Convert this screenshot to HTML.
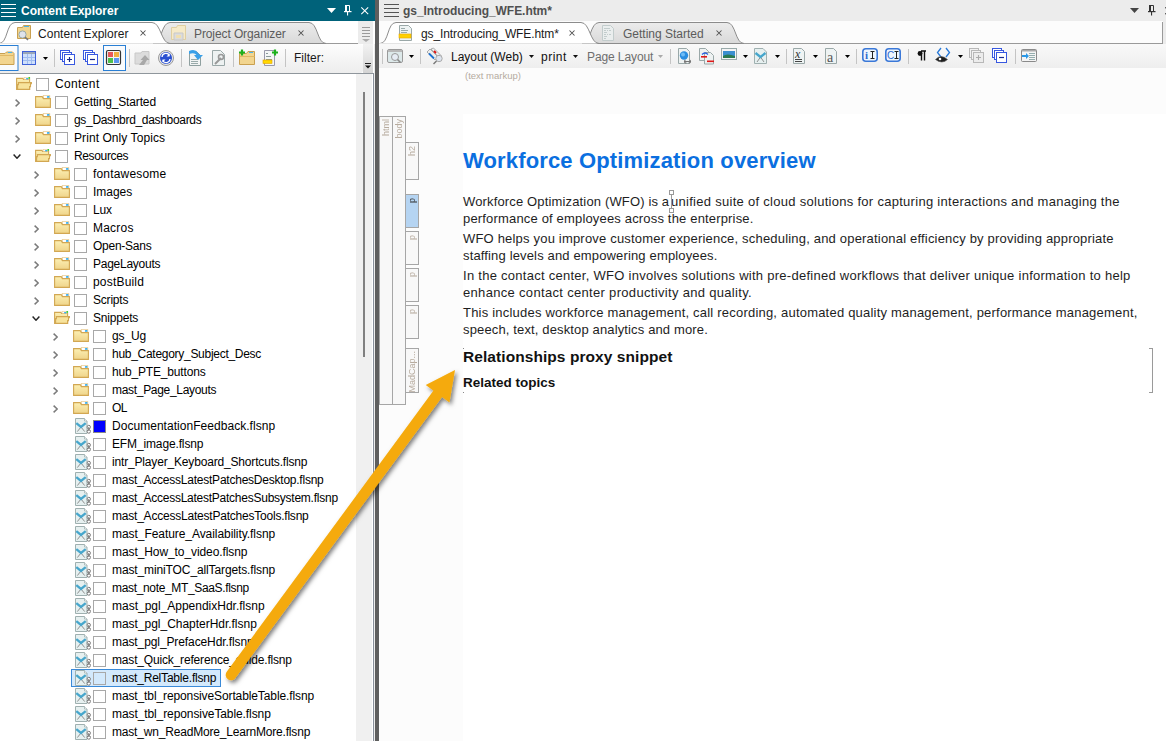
<!DOCTYPE html>
<html><head><meta charset="utf-8">
<style>
*{box-sizing:border-box}
html,body{margin:0;padding:0;width:1166px;height:741px;overflow:hidden;background:#fff;font-family:"Liberation Sans",sans-serif;}
.a{position:absolute}
#lp{position:absolute;left:0;top:0;width:375px;height:741px;background:#fff;overflow:hidden}
#split{position:absolute;left:375px;top:0;width:4px;height:741px;background:#5e5e5e}
#rp{position:absolute;left:379px;top:0;width:787px;height:741px;background:#fcfcfc;overflow:hidden}
.ttl{position:absolute;left:0;top:0;height:21px;}
.ham{position:absolute;width:15px;height:13px;border-top:1px solid;border-bottom:1px solid}
.ham:before,.ham:after{content:"";position:absolute;left:0;right:0;height:1px;background:currentColor}
.ham:before{top:3px}.ham:after{top:7px}
.tt{position:absolute;font-weight:bold;font-size:12px;white-space:nowrap}
.row{position:absolute;height:18px;left:0;right:0}
.rt{position:absolute;top:3px;font-size:12px;color:#000;white-space:nowrap;letter-spacing:-0.1px}
.sel{border:1px solid #3a8ad8;background:#d3e9fc}
.cb{position:absolute;top:4px;width:13px;height:13px;border:1px solid #a8a8a8;background:#fff}
svg{position:absolute;overflow:visible}
.sb{border:1px solid #a6a6a6;background:#f8f8f8}
.sbl{writing-mode:vertical-rl;transform:rotate(180deg);font-size:9px;color:#b7ab9e;white-space:nowrap;line-height:9px}
.doc{font-size:13px;color:#1e1e1e;white-space:nowrap}
.h1{font-size:22px;font-weight:bold;color:#0b6fe0;letter-spacing:0.15px}
.h2{font-size:15.5px;font-weight:bold;color:#111;letter-spacing:0.07px}
.h3{font-size:13.5px;font-weight:bold;color:#111;letter-spacing:0px}
</style></head><body>
<svg width="0" height="0" style="position:absolute">
<defs>
<linearGradient id="fg" x1="0" y1="0" x2="0" y2="1"><stop offset="0" stop-color="#fcf0b4"/><stop offset="1" stop-color="#efd48a"/></linearGradient>
<symbol id="fold" viewBox="0 0 16 13">
<path d="M8.3,0.3 h6.4 v3.5 h-6.4z" fill="#fff" stroke="#e2bb70" stroke-width="0.7"/>
<ellipse cx="13.2" cy="1.9" rx="1.4" ry="0.9" fill="#2aa8f0"/>
<path d="M0.6,1.6 H7.2 L8.4,3.6 H15.4 V12.4 H0.6 Z" fill="url(#fg)" stroke="#d2a752" stroke-width="1.1"/>
</symbol>
<symbol id="foldo" viewBox="0 0 16 13">
<path d="M0.6,1.4 H6.8 L7.6,2.4 H13.6 V12.4 H0.6 Z" fill="url(#fg)" stroke="#d2a752" stroke-width="1.1"/>
<path d="M8,0.3 h5 v2.2 h-5z" fill="#fff" stroke="#e2bb70" stroke-width="0.6"/>
<ellipse cx="11.2" cy="1.7" rx="1.3" ry="0.8" fill="#2aa8f0"/><circle cx="13.3" cy="0.9" r="0.9" fill="#20d020"/>
<path d="M2.4,5.6 H15.4 V6.6 H14.5 V9.6 H13.6 V12.4 H1.6 V7.6 H2.4z" fill="#f7e39c" stroke="#d2a752" stroke-width="1.1"/>
</symbol>
<symbol id="snip" viewBox="0 0 16 16">
<path d="M0.5,0.5 h9 l2.5,2.5 v12.5 h-11.5z" fill="#e6f0f0" stroke="#9fb0b0"/>
<path d="M9.5,0.5 v2.5 h2.5" fill="#fff" stroke="#9fb0b0" stroke-width="0.8"/>
<path d="M6,9 L2.3,13.6 M6,9 L9.7,13.6" stroke="#858585" stroke-width="0.9" fill="none"/>
<path d="M1.3,5.2 L6,9 L10.7,5.2" stroke="#46a6cc" stroke-width="2.3" fill="none"/>
<rect x="12.2" y="7.3" width="3.2" height="3.6" rx="1.6" fill="#fff" stroke="#7a7a7a" stroke-width="1"/>
<rect x="12.2" y="11.6" width="3.2" height="3.6" rx="1.6" fill="#fff" stroke="#7a7a7a" stroke-width="1"/>
<path d="M13.8,9 v4" stroke="#7a7a7a" stroke-width="1"/>
</symbol>
<symbol id="chev" viewBox="0 0 5 8"><path d="M0.6 0.6 L4.2 4 L0.6 7.4" stroke="#7a7a7a" stroke-width="1.5" fill="none"/></symbol>
<symbol id="chevd" viewBox="0 0 8 5"><path d="M0.6 0.6 L4 4.2 L7.4 0.6" stroke="#262626" stroke-width="1.5" fill="none"/></symbol>
</defs>
</svg>

<!-- LEFT PANEL -->
<div id="lp">
  <div class="ttl" style="width:375px;background:#00627a"></div>
  <div class="ham" style="left:1px;top:4px;color:#fff"></div>
  <div class="tt" style="left:21px;top:4px;color:#fff">Content Explorer</div>
  <!-- tab row -->

  <svg class="a" style="left:0;top:0" width="375" height="44">
    <defs><linearGradient id="tg" x1="0" y1="0" x2="0" y2="1"><stop offset="0" stop-color="#ececec"/><stop offset="1" stop-color="#d9d9d9"/></linearGradient></defs>
    <path d="M153,43.5 C162,43.5 161,22.5 170,22.5 H309 C318,22.5 317,43.5 326,43.5 Z" fill="url(#tg)" stroke="#8c8c8c" stroke-width="1"/>
    <path d="M-1,43.5 C8,43.5 6,22.5 15,22.5 H152 C161,22.5 161,43.5 170,43.5" fill="#fff" stroke="#8c8c8c" stroke-width="1"/>
    <rect x="0" y="43" width="153" height="1" fill="#e4e4e4"/>
    <rect x="326" y="43" width="32" height="1" fill="#9a9a9a"/>
    <rect x="358" y="21" width="15" height="23" fill="#ececec"/>
    <path d="M362,27.5h8M362,30.5h8M362,33.5h8M362,36.5h8" stroke="#9a9a9a" stroke-width="1"/>
    <path d="M362,39 h8 l-4,3z" fill="#aaa"/>
  </svg>

  <svg class="a" style="left:0;top:0" width="375" height="44">
    <path d="M17.5,27.5 h5 l1,-2 h7 v13 h-13z" fill="#f0d590" stroke="#c9a050"/>
    <path d="M24,26.5 h5" stroke="#4ab4ea"/>
    <circle cx="22.5" cy="34.5" r="3.6" fill="#dfe3ea" stroke="#9aa" stroke-width="1"/>
    <path d="M25,37 l3,3" stroke="#777" stroke-width="1.6"/>
    <path d="M171.5,27.5 h5 l1,-2 h8 v14 h-14z" fill="#f6eac8" stroke="#e0cfa0"/>
    <path d="M174,33 h9 v7 h-9z" fill="#dcdcdc" stroke="#c8c8c8"/>
    <rect x="176" y="35" width="5" height="3" fill="#f0dfb0"/>
  </svg>
  <div class="a" style="left:38px;top:27px;font-size:12px;color:#1a1a1a;letter-spacing:0.03px">Content Explorer</div>
  <div class="a" style="left:194px;top:27px;font-size:12px;color:#5b5b5b;letter-spacing:-0.1px">Project Organizer</div>
  <svg class="a" style="left:140px;top:30px" width="6" height="6"><path d="M0.5,0.5 L5.5,5.5 M5.5,0.5 L0.5,5.5" stroke="#505050" stroke-width="1.05"/></svg>
  <svg class="a" style="left:298px;top:30px" width="6" height="6"><path d="M0.5,0.5 L5.5,5.5 M5.5,0.5 L0.5,5.5" stroke="#505050" stroke-width="1.05"/></svg>
  <!-- title icons -->
  <svg class="a" style="left:327px;top:8px" width="9" height="5"><path d="M0,0 h9 l-4.5,5z" fill="#fff"/></svg>
  <svg class="a" style="left:343px;top:5px" width="9" height="11"><path d="M2.5,0.5 h4 v6" stroke="#fff" fill="none" stroke-width="1"/><rect x="2" y="0" width="2" height="7" fill="#fff"/><rect x="1" y="6" width="7.5" height="1.2" fill="#fff"/><rect x="4" y="7" width="1.1" height="3.5" fill="#fff"/></svg>
  <svg class="a" style="left:361px;top:7px" width="8" height="8"><path d="M0.3,0.3 L7.2,7.2 M7.2,0.3 L0.3,7.2" stroke="#fff" stroke-width="1.05"/></svg>
  <!-- toolbar -->
  <div class="a" id="ltb" style="left:0;top:44px;width:363px;height:29px;background:linear-gradient(#fdfdfd,#ededed);border-radius:0 3px 3px 0"></div>
  <div class="a" style="left:363px;top:44px;width:10px;height:29px;background:linear-gradient(#f2f2f2,#d4d4d4)"></div>
  <div class="a" style="left:294px;top:51px;font-size:12px;color:#1a1a1a">Filter:</div>

  <svg class="a" style="left:0;top:0" width="375" height="74">
    <!-- selected folder button -->
    <rect x="-1" y="45.5" width="19" height="25" fill="#f9fbfd" stroke="#2a7fd4" stroke-width="1"/>
    <path d="M-2,53.5 h7 l1.5,-1.5 h6 l1.5,1.5 v11 h-16z" fill="#f2d58f" stroke="#c9a050"/>
    <path d="M-1,55.5 h14" stroke="#e0b865"/><path d="M8,52.5 h4" stroke="#4ab4ea"/>
    <!-- table -->
    <rect x="22.5" y="51.5" width="13" height="13" fill="#cfe0fb" stroke="#3f62d8"/>
    <rect x="23" y="52" width="12" height="2" fill="#9aa7b8"/>
    <path d="M23,57.5h12M23,60.5h12M27.5,54v10M31.5,54v10" stroke="#9fbcef"/>
    <path d="M43,57 h5 l-2.5,3z" fill="#000"/>
    <path d="M54.5,49 v18" stroke="#c4c4c4"/>
    <!-- copy plus -->
    <rect x="60.5" y="50.5" width="9" height="9" fill="#fff" stroke="#3858e0"/>
    <rect x="62.5" y="52.5" width="9" height="9" fill="#fff" stroke="#3858e0"/>
    <rect x="64.5" y="54.5" width="10" height="10" fill="#fff" stroke="#3858e0"/>
    <path d="M67,59.5h5M69.5,57v5" stroke="#1a2a90" stroke-width="1.2"/>
    <!-- copy minus -->
    <rect x="83.5" y="50.5" width="9" height="9" fill="#fff" stroke="#3858e0"/>
    <rect x="85.5" y="52.5" width="9" height="9" fill="#fff" stroke="#3858e0"/>
    <rect x="87.5" y="54.5" width="10" height="10" fill="#fff" stroke="#3858e0"/>
    <path d="M90,59.5h5" stroke="#1a2a90" stroke-width="1.2"/>
    <!-- selected grid -->
    <rect x="103.5" y="45.5" width="22" height="25" fill="#f9fbfd" stroke="#2a7fd4" stroke-width="1"/>
    <rect x="106.5" y="50.5" width="14" height="14" rx="1.5" fill="#f4f4f4" stroke="#333" stroke-width="1.2"/>
    <rect x="108" y="52" width="5" height="5" fill="#e85a5a"/><rect x="114" y="52" width="5" height="5" fill="#f0b040"/>
    <rect x="108" y="58" width="5" height="5" fill="#4cc04c"/><rect x="114" y="58" width="5" height="5" fill="#5a96f0"/>
    <path d="M129.5,49 v18" stroke="#c4c4c4"/>
    <!-- gray folder up -->
    <path d="M135,53 h6 l1,-1.5 h7 v12.5 h-14z" fill="#dcdcdc" stroke="#c8c8c8"/>
    <path d="M139,65 l4,-5 h-2.5 l4.5,-5 l4.5,5 h-2.5 l-3,5z" fill="#a8a8a8"/>
    <!-- sync -->
    <circle cx="166" cy="58" r="7.5" fill="#e8e8e8" stroke="#9a9a9a"/>
    <circle cx="166" cy="58" r="6" fill="#2a50d0"/>
    <path d="M162,57 a4,4 0 0 1 7.5,-1.5 M170,59 a4,4 0 0 1 -7.5,1.5" stroke="#fff" stroke-width="1.3" fill="none"/>
    <path d="M169.5,53.5 v3 h-3z M162.5,62.5 v-3 h3z" fill="#fff"/>
    <path d="M181.5,49 v18" stroke="#c4c4c4"/>
    <!-- doc arrow -->
    <path d="M189.5,51.5 h7 l4,4 v10 h-11z" fill="#f2f4f4" stroke="#8fa0a0"/>
    <path d="M191,59.5h7M191,61.5h7M191,63.5h7" stroke="#9aa"/>
    <path d="M189,51 q6,-3 9,2 l2,2 h3 l-5,5 l-4,-5 h2.5 q-2,-3 -7.5,-1z" fill="#3aa0e8"/>
    <!-- doc wrench -->
    <path d="M212.5,50.5 h8 l4,4 v11 h-12z" fill="#eef2f2" stroke="#9aa8a8"/>
    <path d="M215,64 l6,-6" stroke="#999" stroke-width="2"/><circle cx="221" cy="57" r="2.5" fill="none" stroke="#999" stroke-width="1.6"/>
    <path d="M233.5,49 v18" stroke="#c4c4c4"/>
    <!-- folder plus -->
    <path d="M239.5,53.5 h7 l1.5,-2 h6.5 v13 h-15z" fill="#f2d58f" stroke="#c9a050"/>
    <path d="M240,56.5 h14.5" stroke="#e0b865"/><path d="M249,52.5 h4" stroke="#4ab4ea"/>
    <path d="M239,52.5h6M242,49.5v6" stroke="#1cb01c" stroke-width="2.2"/>
    <!-- doc plus -->
    <path d="M264.5,50.5 h10 v15 h-10z" fill="#f4f6f6" stroke="#99a"/>
    <path d="M266,53.5h2M266,56.5h5M266,59.5h6" stroke="#8a9a9a"/>
    <rect x="263" y="60" width="9" height="3.5" fill="#ffd800" stroke="#e0a000" stroke-width="0.6"/>
    <path d="M272,52.5h6M275,49.5v6" stroke="#1cb01c" stroke-width="2.2"/>
    <path d="M285.5,49 v18" stroke="#c4c4c4"/>
    <!-- overflow -->
    <path d="M365,63.5 h6" stroke="#222"/><path d="M365,65.5 h6 l-3,3z" fill="#111"/>
  </svg>
  <!-- tree -->
  <div class="a" style="left:0;top:73px;width:374px;height:668px;border-top:1px solid #8f969c;border-right:1px solid #888f9a;background:#fff"></div>
  <div class="a" style="left:374px;top:44px;width:1px;height:697px;background:#ececec"></div>
  <div class="a" style="left:356px;top:74px;width:16px;height:667px;background:#f0f0f0"></div>
  <div class="a" style="left:363px;top:92px;width:2px;height:265px;background:#808080"></div>
  <div id="tree">
<div class="row" style="top:74px"><svg style="left:16px;top:3px" width="16" height="13"><use href="#foldo"/></svg><div class="cb" style="left:36px"></div><div class="rt" style="left:55px;letter-spacing:0.367px">Content</div></div>
<div class="row" style="top:92px"><svg style="left:15px;top:7px" width="5" height="8"><use href="#chev"/></svg><svg style="left:35px;top:3px" width="16" height="13"><use href="#fold"/></svg><div class="cb" style="left:55px"></div><div class="rt" style="left:74px;letter-spacing:-0.143px">Getting_Started</div></div>
<div class="row" style="top:110px"><svg style="left:15px;top:7px" width="5" height="8"><use href="#chev"/></svg><svg style="left:35px;top:3px" width="16" height="13"><use href="#fold"/></svg><div class="cb" style="left:55px"></div><div class="rt" style="left:74px;letter-spacing:-0.320px">gs_Dashbrd_dashboards</div></div>
<div class="row" style="top:128px"><svg style="left:15px;top:7px" width="5" height="8"><use href="#chev"/></svg><svg style="left:35px;top:3px" width="16" height="13"><use href="#fold"/></svg><div class="cb" style="left:55px"></div><div class="rt" style="left:74px;letter-spacing:0.075px">Print Only Topics</div></div>
<div class="row" style="top:146px"><svg style="left:13px;top:8px" width="8" height="5"><use href="#chevd"/></svg><svg style="left:35px;top:3px" width="16" height="13"><use href="#foldo"/></svg><div class="cb" style="left:55px"></div><div class="rt" style="left:74px;letter-spacing:-0.362px">Resources</div></div>
<div class="row" style="top:164px"><svg style="left:34px;top:7px" width="5" height="8"><use href="#chev"/></svg><svg style="left:54px;top:3px" width="16" height="13"><use href="#fold"/></svg><div class="cb" style="left:74px"></div><div class="rt" style="left:93px;letter-spacing:0.180px">fontawesome</div></div>
<div class="row" style="top:182px"><svg style="left:34px;top:7px" width="5" height="8"><use href="#chev"/></svg><svg style="left:54px;top:3px" width="16" height="13"><use href="#fold"/></svg><div class="cb" style="left:74px"></div><div class="rt" style="left:93px;letter-spacing:-0.020px">Images</div></div>
<div class="row" style="top:200px"><svg style="left:34px;top:7px" width="5" height="8"><use href="#chev"/></svg><svg style="left:54px;top:3px" width="16" height="13"><use href="#fold"/></svg><div class="cb" style="left:74px"></div><div class="rt" style="left:93px;letter-spacing:-0.150px">Lux</div></div>
<div class="row" style="top:218px"><svg style="left:34px;top:7px" width="5" height="8"><use href="#chev"/></svg><svg style="left:54px;top:3px" width="16" height="13"><use href="#fold"/></svg><div class="cb" style="left:74px"></div><div class="rt" style="left:93px;letter-spacing:0.220px">Macros</div></div>
<div class="row" style="top:236px"><svg style="left:34px;top:7px" width="5" height="8"><use href="#chev"/></svg><svg style="left:54px;top:3px" width="16" height="13"><use href="#fold"/></svg><div class="cb" style="left:74px"></div><div class="rt" style="left:93px;letter-spacing:-0.250px">Open-Sans</div></div>
<div class="row" style="top:254px"><svg style="left:34px;top:7px" width="5" height="8"><use href="#chev"/></svg><svg style="left:54px;top:3px" width="16" height="13"><use href="#fold"/></svg><div class="cb" style="left:74px"></div><div class="rt" style="left:93px;letter-spacing:-0.250px">PageLayouts</div></div>
<div class="row" style="top:272px"><svg style="left:34px;top:7px" width="5" height="8"><use href="#chev"/></svg><svg style="left:54px;top:3px" width="16" height="13"><use href="#fold"/></svg><div class="cb" style="left:74px"></div><div class="rt" style="left:93px;letter-spacing:0.188px">postBuild</div></div>
<div class="row" style="top:290px"><svg style="left:34px;top:7px" width="5" height="8"><use href="#chev"/></svg><svg style="left:54px;top:3px" width="16" height="13"><use href="#fold"/></svg><div class="cb" style="left:74px"></div><div class="rt" style="left:93px;letter-spacing:-0.200px">Scripts</div></div>
<div class="row" style="top:308px"><svg style="left:32px;top:8px" width="8" height="5"><use href="#chevd"/></svg><svg style="left:54px;top:3px" width="16" height="13"><use href="#foldo"/></svg><div class="cb" style="left:74px"></div><div class="rt" style="left:93px;letter-spacing:-0.200px">Snippets</div></div>
<div class="row" style="top:326px"><svg style="left:53px;top:7px" width="5" height="8"><use href="#chev"/></svg><svg style="left:73px;top:3px" width="16" height="13"><use href="#fold"/></svg><div class="cb" style="left:93px"></div><div class="rt" style="left:112px;letter-spacing:-0.100px">gs_Ug</div></div>
<div class="row" style="top:344px"><svg style="left:53px;top:7px" width="5" height="8"><use href="#chev"/></svg><svg style="left:73px;top:3px" width="16" height="13"><use href="#fold"/></svg><div class="cb" style="left:93px"></div><div class="rt" style="left:112px;letter-spacing:-0.283px">hub_Category_Subject_Desc</div></div>
<div class="row" style="top:362px"><svg style="left:53px;top:7px" width="5" height="8"><use href="#chev"/></svg><svg style="left:73px;top:3px" width="16" height="13"><use href="#fold"/></svg><div class="cb" style="left:93px"></div><div class="rt" style="left:112px;letter-spacing:-0.171px">hub_PTE_buttons</div></div>
<div class="row" style="top:380px"><svg style="left:53px;top:7px" width="5" height="8"><use href="#chev"/></svg><svg style="left:73px;top:3px" width="16" height="13"><use href="#fold"/></svg><div class="cb" style="left:93px"></div><div class="rt" style="left:112px;letter-spacing:-0.306px">mast_Page_Layouts</div></div>
<div class="row" style="top:398px"><svg style="left:53px;top:7px" width="5" height="8"><use href="#chev"/></svg><svg style="left:73px;top:3px" width="16" height="13"><use href="#fold"/></svg><div class="cb" style="left:93px"></div><div class="rt" style="left:112px;letter-spacing:-0.500px">OL</div></div>
<div class="row" style="top:416px"><svg style="left:75px;top:2px" width="16" height="16"><use href="#snip"/></svg><div class="cb" style="left:93px;background:#0000ff;border-color:#888"></div><div class="rt" style="left:112px;letter-spacing:0.038px">DocumentationFeedback.flsnp</div></div>
<div class="row" style="top:434px"><svg style="left:75px;top:2px" width="16" height="16"><use href="#snip"/></svg><div class="cb" style="left:93px"></div><div class="rt" style="left:112px;letter-spacing:-0.136px">EFM_image.flsnp</div></div>
<div class="row" style="top:452px"><svg style="left:75px;top:2px" width="16" height="16"><use href="#snip"/></svg><div class="cb" style="left:93px"></div><div class="rt" style="left:112px;letter-spacing:-0.171px">intr_Player_Keyboard_Shortcuts.flsnp</div></div>
<div class="row" style="top:470px"><svg style="left:75px;top:2px" width="16" height="16"><use href="#snip"/></svg><div class="cb" style="left:93px"></div><div class="rt" style="left:112px;letter-spacing:-0.231px">mast_AccessLatestPatchesDesktop.flsnp</div></div>
<div class="row" style="top:488px"><svg style="left:75px;top:2px" width="16" height="16"><use href="#snip"/></svg><div class="cb" style="left:93px"></div><div class="rt" style="left:112px;letter-spacing:-0.247px">mast_AccessLatestPatchesSubsystem.flsnp</div></div>
<div class="row" style="top:506px"><svg style="left:75px;top:2px" width="16" height="16"><use href="#snip"/></svg><div class="cb" style="left:93px"></div><div class="rt" style="left:112px;letter-spacing:-0.215px">mast_AccessLatestPatchesTools.flsnp</div></div>
<div class="row" style="top:524px"><svg style="left:75px;top:2px" width="16" height="16"><use href="#snip"/></svg><div class="cb" style="left:93px"></div><div class="rt" style="left:112px;letter-spacing:-0.060px">mast_Feature_Availability.flsnp</div></div>
<div class="row" style="top:542px"><svg style="left:75px;top:2px" width="16" height="16"><use href="#snip"/></svg><div class="cb" style="left:93px"></div><div class="rt" style="left:112px;letter-spacing:-0.086px">mast_How_to_video.flsnp</div></div>
<div class="row" style="top:560px"><svg style="left:75px;top:2px" width="16" height="16"><use href="#snip"/></svg><div class="cb" style="left:93px"></div><div class="rt" style="left:112px;letter-spacing:-0.118px">mast_miniTOC_allTargets.flsnp</div></div>
<div class="row" style="top:578px"><svg style="left:75px;top:2px" width="16" height="16"><use href="#snip"/></svg><div class="cb" style="left:93px"></div><div class="rt" style="left:112px;letter-spacing:-0.341px">mast_note_MT_SaaS.flsnp</div></div>
<div class="row" style="top:596px"><svg style="left:75px;top:2px" width="16" height="16"><use href="#snip"/></svg><div class="cb" style="left:93px"></div><div class="rt" style="left:112px;letter-spacing:-0.008px">mast_pgl_AppendixHdr.flsnp</div></div>
<div class="row" style="top:614px"><svg style="left:75px;top:2px" width="16" height="16"><use href="#snip"/></svg><div class="cb" style="left:93px"></div><div class="rt" style="left:112px;letter-spacing:-0.025px">mast_pgl_ChapterHdr.flsnp</div></div>
<div class="row" style="top:632px"><svg style="left:75px;top:2px" width="16" height="16"><use href="#snip"/></svg><div class="cb" style="left:93px"></div><div class="rt" style="left:112px;letter-spacing:-0.100px">mast_pgl_PrefaceHdr.flsnp</div></div>
<div class="row" style="top:650px"><svg style="left:75px;top:2px" width="16" height="16"><use href="#snip"/></svg><div class="cb" style="left:93px"></div><div class="rt" style="left:112px;letter-spacing:-0.174px">mast_Quick_reference_guide.flsnp</div></div>
<div class="row" style="top:668px"><div class="a sel" style="left:71px;top:1px;width:150px;height:18px"></div><svg style="left:75px;top:2px" width="16" height="16"><use href="#snip"/></svg><div class="cb" style="left:93px;background:transparent"></div><div class="rt" style="left:112px;letter-spacing:-0.200px">mast_RelTable.flsnp</div></div>
<div class="row" style="top:686px"><svg style="left:75px;top:2px" width="16" height="16"><use href="#snip"/></svg><div class="cb" style="left:93px"></div><div class="rt" style="left:112px;letter-spacing:-0.111px">mast_tbl_reponsiveSortableTable.flsnp</div></div>
<div class="row" style="top:704px"><svg style="left:75px;top:2px" width="16" height="16"><use href="#snip"/></svg><div class="cb" style="left:93px"></div><div class="rt" style="left:112px;letter-spacing:-0.093px">mast_tbl_reponsiveTable.flsnp</div></div>
<div class="row" style="top:722px"><svg style="left:75px;top:2px" width="16" height="16"><use href="#snip"/></svg><div class="cb" style="left:93px"></div><div class="rt" style="left:112px;letter-spacing:-0.187px">mast_wn_ReadMore_LearnMore.flsnp</div></div>
</div><!--/tree-->
</div>
<div id="split"></div>

<!-- RIGHT PANEL -->
<div id="rp">
  <div class="ttl" style="width:787px;background:#ececec"></div>
  <div class="ham" style="left:5px;top:4px;color:#555"></div>
  <div class="tt" style="left:24px;top:4px;color:#505050;letter-spacing:-0.05px">gs_Introducing_WFE.htm*</div>

  <svg class="a" style="left:0;top:0" width="787" height="44">
    <path d="M203,43.5 C212,43.5 211,22.5 220,22.5 H348 C357,22.5 356,43.5 365,43.5 Z" fill="url(#tg)" stroke="#8c8c8c" stroke-width="1"/>
    <path d="M1,43.5 C10,43.5 8,22.5 17,22.5 H202 C211,22.5 211,43.5 220,43.5" fill="#fff" stroke="#8c8c8c" stroke-width="1"/>
    <rect x="0" y="43" width="203" height="1" fill="#e4e4e4"/>
    <rect x="365" y="43" width="419" height="1" fill="#9a9a9a"/>
    <rect x="784" y="21" width="3" height="23" fill="#ececec"/>
    <rect x="783" y="22" width="1" height="22" fill="#9a9a9a"/>
  </svg>

  <svg class="a" style="left:-379px;top:0" width="1166" height="44">
    <path d="M399.5,25.5 h9 l3,3 v12 h-12z" fill="#eef3f3" stroke="#9aa8a8"/>
    <path d="M401,28.5h4M401,30.5h7M401,32.5h6" stroke="#9aa"/>
    <rect x="399" y="34" width="12" height="4" fill="#ffd000" stroke="#e8a800" stroke-width="0.6"/>
    <path d="M602.5,25.5 h8 l3,3 v12 h-11z" fill="#eaeeee" stroke="#c2cccc"/>
    <path d="M604,28.5h6M604,30.5h2M607,30.5h1M609,30.5h2M604,32.5h3M604,34.5h2M607,34.5h1M609,34.5h2M604,36.5h3M604,38.5h2" stroke="#c2cccc"/>
  </svg>
  <div class="a" style="left:42px;top:27px;font-size:12px;color:#1a1a1a;letter-spacing:-0.1px">gs_Introducing_WFE.htm*</div>
  <div class="a" style="left:244px;top:27px;font-size:12px;color:#5b5b5b;letter-spacing:0px">Getting Started</div>
  <svg class="a" style="left:190px;top:30px" width="6" height="6"><path d="M0.5,0.5 L5.5,5.5 M5.5,0.5 L0.5,5.5" stroke="#505050" stroke-width="1.05"/></svg>
  <svg class="a" style="left:337px;top:30px" width="6" height="6"><path d="M0.5,0.5 L5.5,5.5 M5.5,0.5 L0.5,5.5" stroke="#505050" stroke-width="1.05"/></svg>
  <svg class="a" style="left:751px;top:8px" width="9" height="5"><path d="M0,0 h9 l-4.5,5z" fill="#444"/></svg>
  <svg class="a" style="left:768px;top:5px" width="9" height="11"><path d="M2.5,0.5 h4 v6" stroke="#333" fill="none" stroke-width="1"/><rect x="2" y="0" width="2" height="7" fill="#333"/><rect x="1" y="6" width="7.5" height="1.2" fill="#333"/><rect x="4" y="7" width="1.1" height="3.5" fill="#333"/></svg>
  <svg class="a" style="left:786px;top:7px" width="8" height="8"><path d="M0.3,0.3 L7.2,7.2 M7.2,0.3 L0.3,7.2" stroke="#333" stroke-width="1.05"/></svg>
  <div class="a" style="left:0;top:44px;width:787px;height:24px;background:linear-gradient(#f9f9f9,#eeeeee)"></div>


  <div class="a" style="left:72px;top:50px;font-size:12px;color:#111;letter-spacing:0px">Layout (Web)</div>
  <div class="a" style="left:162px;top:50px;font-size:12px;color:#111;letter-spacing:0.5px">print</div>
  <div class="a" style="left:208px;top:50px;font-size:12px;color:#6e6e6e;letter-spacing:-0.1px">Page Layout</div>
  <svg class="a" style="left:-379px;top:0" width="1166" height="70">
    <path d="M382.5,49 v15" stroke="#c4c4c4"/>
    <!-- preview window -->
    <rect x="387.5" y="49.5" width="15" height="13" rx="1.5" fill="#dde9ea" stroke="#9a9a9a"/>
    <rect x="388" y="50" width="14" height="2" fill="#b8b8b8"/>
    <circle cx="395" cy="57" r="3.5" fill="#e6ecf4" stroke="#999" stroke-width="1"/>
    <path d="M397.5,59.5 l3,3" stroke="#888" stroke-width="1.6"/>
    <path d="M409,55 h5 l-2.5,3z" fill="#000"/>
    <path d="M420.5,49 v15" stroke="#c4c4c4"/>
    <!-- tags magnifier -->
    <path d="M427,52 l3,-3 l8,8 l-3,3z" fill="#eee" stroke="#999" stroke-width="0.8"/>
    <path d="M431,49 l2.5,-1 l8,8 l-2,2z" fill="#eee" stroke="#999" stroke-width="0.8"/>
    <path d="M429,53.5 l5,5" stroke="#1a70d0" stroke-width="1.8"/>
    <path d="M434,51 l2,2" stroke="#e01010" stroke-width="1.8"/>
    <circle cx="439" cy="58.5" r="3.2" fill="#dde4ee" stroke="#aaa"/>
    <path d="M436.5,61 l-3,3" stroke="#777" stroke-width="1.5"/>
    <path d="M529,55 h5 l-2.5,3z" fill="#111"/>
    <path d="M573,55 h5 l-2.5,3z" fill="#111"/>
    <path d="M658,55 h5 l-2.5,3z" fill="#aaa"/>
    <path d="M670.5,49 v15" stroke="#c4c4c4"/>
    <!-- globe doc -->
    <path d="M678.5,48.5 h8 l3,3 v12 h-11z" fill="#eef2f2" stroke="#9aa8a8"/>
    <circle cx="684" cy="55.5" r="4.2" fill="#2a8ee0"/><circle cx="683" cy="54.5" r="2" fill="#8cd0ff" opacity="0.7"/>
    <path d="M685,61.5 h5 M685.5,60 a1.6,1.6 0 0 0 0,3 h1 M689.5,60 a1.6,1.6 0 0 1 0,3 h-1" stroke="#777" stroke-width="1.1" fill="none"/>
    <!-- two docs -->
    <path d="M699.5,48.5 h6 l3,3 v9 h-9z" fill="#eef2f2" stroke="#9aa8a8"/>
    <path d="M704.5,52.5 h6 l3,3 v8.5 h-9z" fill="#eef2f2" stroke="#9aa8a8"/>
    <rect x="701" y="56" width="6" height="1.6" fill="#e01818"/><rect x="707" y="60.5" width="7" height="1.6" fill="#e01818"/>
    <path d="M702,54.5 q3,-3 6,0" stroke="#2a60e0" stroke-width="1.2" fill="none"/>
    <!-- image -->
    <rect x="721.5" y="48.5" width="15" height="11" fill="#f4f4f4" stroke="#9aa"/>
    <path d="M723,51 h12 v7 h-12z" fill="#3a8fd0"/>
    <path d="M723,56 q4,-3 12,0 v2 h-12z" fill="#2a7a50"/>
    <path d="M743,55 h5 l-2.5,3z" fill="#000"/>
    <!-- snippet doc -->
    <path d="M754.5,48.5 h8.5 l3.5,3.5 v11.5 h-12z" fill="#e6f0f0" stroke="#9fb0b0"/>
    <path d="M760.5,57 L757,62 M760.5,57 L764,62" stroke="#858585" stroke-width="0.9" fill="none"/>
    <path d="M755.5,53 L760.5,57 L765.5,53" stroke="#46a6cc" stroke-width="2.3" fill="none"/>
    <path d="M775,55 h5 l-2.5,3z" fill="#000"/>
    <path d="M786.5,49 v15" stroke="#c4c4c4"/>
    <!-- x doc -->
    <path d="M793.5,48.5 h8 l3,3 v12 h-11z" fill="#eef3f3" stroke="#9aa8a8"/>
    <text x="795" y="57.5" font-family="Liberation Serif" font-style="italic" font-size="12" fill="#333">x</text>
    <path d="M795,59.5h7M795,61.5h7" stroke="#444"/>
    <path d="M813,55 h5 l-2.5,3z" fill="#000"/>
    <path d="M825.5,48.5 h8 l3,3 v12 h-11z" fill="#eef3f3" stroke="#9aa8a8"/>
    <text x="827" y="61.5" font-family="Liberation Serif" font-size="14" fill="#555">a</text>
    <path d="M845,55 h5 l-2.5,3z" fill="#000"/>
    <path d="M856.5,49 v15" stroke="#c4c4c4"/>
    <!-- iI CI -->
    <rect x="862.8" y="48.8" width="14.4" height="12.4" rx="3" fill="#eef5fd" stroke="#3a78d8" stroke-width="1.6"/>
    <text x="865" y="59" font-family="Liberation Serif" font-weight="bold" font-size="11" fill="#2f6cd0">i</text>
    <path d="M870.5,51.5 h4 M872.5,51.5 v7 M870.5,58.5 h4" stroke="#222" stroke-width="1"/>
    <rect x="885.8" y="48.8" width="14.4" height="12.4" rx="3" fill="#eef5fd" stroke="#3a78d8" stroke-width="1.6"/>
    <text x="887" y="59" font-family="Liberation Sans" font-size="10" fill="#2f6cd0">C</text>
    <path d="M894.5,51.5 h4 M896.5,51.5 v7 M894.5,58.5 h4" stroke="#222" stroke-width="1"/>
    <path d="M908.5,49 v15" stroke="#c4c4c4"/>
    <!-- pilcrow -->
    <path d="M921,51 h5 M921.5,51 v9.5 M924.5,51 v9.5" stroke="#111" stroke-width="1.4"/>
    <circle cx="920" cy="53.5" r="2.4" fill="#111"/>
    <!-- eye -->
    <path d="M941,48 l-3.5,4.5 l3.5,4.5 M946,48 l3.5,4.5 l-3.5,4.5" stroke="#2a7ad8" stroke-width="1.3" fill="none"/>
    <path d="M935.5,59.5 q5.5,-6 12,0 q-5.5,5 -12,0z" fill="#1e1e1e" stroke="#555" stroke-width="0.6"/>
    <circle cx="940" cy="59" r="1.3" fill="#fff"/>
    <path d="M958,55 h5 l-2.5,3z" fill="#000"/>
    <!-- copy plus gray -->
    <rect x="969.5" y="48.5" width="9" height="9" fill="#f2f2f2" stroke="#b8b8b8"/>
    <rect x="971.5" y="50.5" width="9" height="9" fill="#f2f2f2" stroke="#b8b8b8"/>
    <rect x="973.5" y="52.5" width="10" height="10" fill="#ececec" stroke="#b8b8b8"/>
    <path d="M976,57.5h5M978.5,55v5" stroke="#aaa" stroke-width="1.1"/>
    <!-- copy minus blue -->
    <rect x="992.5" y="48.5" width="9" height="9" fill="#fff" stroke="#3858e0"/>
    <rect x="994.5" y="50.5" width="9" height="9" fill="#fff" stroke="#3858e0"/>
    <rect x="996.5" y="52.5" width="10" height="10" fill="#fff" stroke="#3858e0"/>
    <path d="M999,57.5h5" stroke="#1a2a90" stroke-width="1.2"/>
    <path d="M1015.5,49 v15" stroke="#c4c4c4"/>
    <!-- last -->
    <rect x="1021.5" y="49.5" width="15" height="12" rx="1" fill="#f4f4f4" stroke="#8a8a8a"/>
    <rect x="1022" y="50" width="14" height="1.5" fill="#aaa"/>
    <path d="M1029,53.5h6M1029,55.5h6M1029,57.5h6M1029,59.5h6" stroke="#7a9a9a" stroke-width="0.8"/>
    <path d="M1022,55 h4 v-2 l3,3 l-3,3 v-2 h-4z" fill="#2a98e8"/>
  </svg>
  <!-- page -->
  <div class="a" style="left:84px;top:114px;width:703px;height:627px;background:#fff"></div>
  <div class="a" style="left:86px;top:70px;font-size:9.5px;color:#b5aba0">(text markup)</div>
  <div class="a doc h1" style="left:84px;top:148px">Workforce Optimization overview</div>
  <div class="a doc" id="l1" style="letter-spacing:0.15px;left:84px;top:194px">Workforce Optimization (WFO) is a</div><div class="a doc" id="l1b" style="letter-spacing:0.285px;left:292px;top:194px">unified suite of cloud solutions for capturing interactions and managing the</div>
  <div class="a doc" id="l2" style="letter-spacing:0.17px;left:84px;top:211px">performance of employees across the enterprise.</div>
  <div class="a doc" id="l3" style="letter-spacing:0.19px;left:84px;top:231px">WFO helps you improve customer experience, scheduling, and operational efficiency by providing appropriate</div>
  <div class="a doc" id="l4" style="letter-spacing:0.15px;left:84px;top:248px">staffing levels and empowering employees.</div>
  <div class="a doc" id="l5" style="letter-spacing:0.27px;left:84px;top:268px">In the contact center, WFO involves solutions with pre-defined workflows that deliver unique information to help</div>
  <div class="a doc" id="l6" style="letter-spacing:0.32px;left:84px;top:285px">enhance contact center productivity and quality.</div>
  <div class="a doc" id="l7" style="letter-spacing:0.21px;left:84px;top:305px">This includes workforce management, call recording, automated quality management, performance management,</div>
  <div class="a doc" id="l8" style="letter-spacing:0.14px;left:84px;top:322px">speech, text, desktop analytics and more.</div>
  <div class="a doc h2" style="left:84px;top:348px">Relationships proxy snippet</div>
  <div class="a doc h3" style="left:84px;top:375px">Related topics</div>

  <!-- structure bars -->
  <div class="a sb" style="left:0;top:116px;width:14px;height:289px"></div>
  <div class="a sb" style="left:13px;top:116px;width:14px;height:289px"></div>
  <div class="a sbl" style="left:3px;top:119px">html</div>
  <div class="a sbl" style="left:16px;top:119px">body</div>
  <div class="a sb" style="left:26px;top:142px;width:14px;height:38px"></div>
  <div class="a sbl" style="left:29px;top:146px">h2</div>
  <div class="a sb" style="left:26px;top:194px;width:14px;height:34px;background:#b5d4f2"></div>
  <div class="a sbl" style="left:29px;top:198px;color:#333">p</div>
  <div class="a sb" style="left:26px;top:231px;width:14px;height:34px"></div>
  <div class="a sbl" style="left:29px;top:235px">p</div>
  <div class="a sb" style="left:26px;top:268px;width:14px;height:34px"></div>
  <div class="a sbl" style="left:29px;top:272px">p</div>
  <div class="a sb" style="left:26px;top:305px;width:14px;height:34px"></div>
  <div class="a sbl" style="left:29px;top:309px">p</div>
  <div class="a sb" style="left:26px;top:348px;width:14px;height:45px"></div>
  <div class="a sbl" style="left:29px;top:351px">MadCap...</div>
  <!-- cursor marker -->
  <div class="a" style="left:292px;top:190px;width:1px;height:22px;background:#9a9a9a"></div>
  <div class="a" style="left:290px;top:190px;width:5px;height:5px;border:1px solid #9a9a9a;background:#fff"></div>
  <div class="a" style="left:290px;top:208px;width:5px;height:5px;border:1px solid #9a9a9a;background:#fff"></div>
  <!-- snippet bracket -->
  <div class="a" style="left:770px;top:348px;width:4px;height:45px;border:1px solid #9a9a9a;border-left:none"></div>
  <div class="a" style="left:84px;top:348px;width:1px;height:1px;background:#888"></div>
  <div class="a" style="left:84px;top:392px;width:1px;height:1px;background:#888"></div>
</div>

<svg class="a" style="left:0;top:0;z-index:10" width="1166" height="741">
  <defs><filter id="sh" x="-20%" y="-20%" width="140%" height="140%"><feDropShadow dx="2" dy="2.5" stdDeviation="2.2" flood-color="#000" flood-opacity="0.5"/></filter></defs>
  <g filter="url(#sh)">
    <line x1="231" y1="675" x2="438" y2="393.5" stroke="#f5aa0a" stroke-width="10.6" stroke-linecap="round"/>
    <path d="M455,370 L449.45,402.4 L425.75,385 Z" fill="#f5aa0a"/>
  </g>
</svg>
</body></html>
